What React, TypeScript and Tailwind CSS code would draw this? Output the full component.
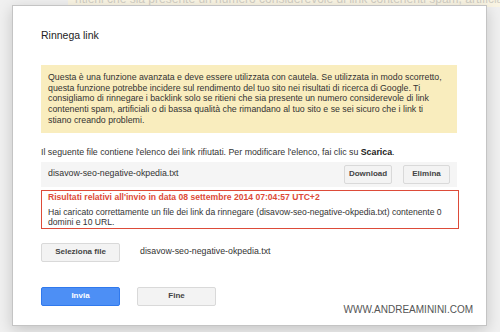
export default function App() {
  return (
    <div className="relative h-[332px] w-[500px] overflow-hidden bg-[#f0f0f0] font-['Liberation_Sans',Arial,sans-serif] text-[#222]">
      {/* underlying page, faded */}
      <div className="absolute left-[68px] top-0 h-[7px] w-[440px] overflow-hidden bg-[#faf5e4]">
        <p className="-mt-[7px] whitespace-nowrap pl-[7px] text-[12px] leading-[12px] text-[#d2cfc4]">
          ritieni che sia presente un numero considerevole di link contenenti spam, artificiali o di bassa qualità che rimandano
        </p>
      </div>

      {/* Dialog */}
      <div className="relative ml-[12px] mt-[5px] h-[321px] w-[475px] border border-[#c4c4c4] bg-white px-[28px] pt-[22px] shadow-[0_4px_14px_rgba(0,0,0,0.18)]">
        <h1 className="text-[10.5px] leading-[14px] text-[#222]">Rinnega link</h1>

        <div className="mt-[23px] w-[416px] bg-[#f9edbe] px-[7px] py-[7px] text-[8.8px] leading-[10.7px] text-[#333]">
          <p className="whitespace-nowrap">
            Questa è una funzione avanzata e deve essere utilizzata con cautela. Se utilizzata in modo scorretto,
            <br />
            questa funzione potrebbe incidere sul rendimento del tuo sito nei risultati di ricerca di Google. Ti
            <br />
            consigliamo di rinnegare i backlink solo se ritieni che sia presente un numero considerevole di link
            <br />
            contenenti spam, artificiali o di bassa qualità che rimandano al tuo sito e se sei sicuro che i link ti
            <br />
            stiano creando problemi.
          </p>
        </div>

        <p className="mt-[14px] whitespace-nowrap text-[8.8px] leading-[11px] text-[#333]">
          Il seguente file contiene l'elenco dei link rifiutati. Per modificare l'elenco, fai clic su{" "}
          <span className="font-bold text-[#222]">Scarica</span>.
        </p>

        <div className="mt-[4px] flex h-[25px] w-[416px] items-center bg-[#f5f5f5] pl-[7px] pr-[7px]">
          <span className="flex-1 text-[8.8px] text-[#333]">disavow-seo-negative-okpedia.txt</span>
          <div className="flex gap-[11px]">
            <Btn label="Download" className="w-[48px]" />
            <Btn label="Elimina" className="w-[47px]" />
          </div>
        </div>

        <div className="mt-[3px] w-[418px] border border-[#dd4b39] px-[6px] pt-[1px] text-[8.6px]">
          <p className="whitespace-nowrap font-bold leading-[11px] text-[#dd4b39]">
            Risultati relativi all'invio in data 08 settembre 2014 07:04:57 UTC+2
          </p>
          <p className="mt-[4px] whitespace-nowrap leading-[10.5px] text-[#333]">
            Hai caricato correttamente un file dei link da rinnegare (disavow-seo-negative-okpedia.txt) contenente 0
            <br />
            domini e 10 URL.
          </p>
        </div>

        <div className="mt-[14px] flex items-center gap-[20px]">
          <Btn label="Seleziona file" className="w-[79px]" />
          <span className="text-[8.8px] text-[#333]">disavow-seo-negative-okpedia.txt</span>
        </div>

        <div className="mt-[25px] flex gap-[17px]">
          <button className="flex h-[19px] w-[79px] items-center justify-center rounded-[2px] border border-[#3079ed] bg-[#4d8ff5] text-[8px] font-bold text-white">
            Invia
          </button>
          <Btn label="Fine" className="w-[79px]" />
        </div>
      </div>

      {/* watermark */}
      <span className="absolute right-[27px] top-[304px] text-[10px] leading-[12px] text-[#555]">
        WWW.ANDREAMININI.COM
      </span>
    </div>
  );
}

function Btn({ label, className }: { label: string; className?: string }) {
  return (
    <button
      className={`flex h-[19px] items-center justify-center rounded-[2px] border border-[#d9d9d9] bg-[#f3f3f3] text-[8px] font-bold text-[#444] ${className ?? ""}`}
    >
      {label}
    </button>
  );
}
